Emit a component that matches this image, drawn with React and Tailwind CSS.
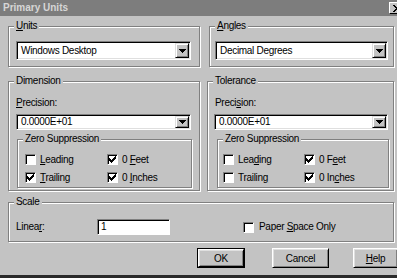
import React from "react";

const BG = "bg-[#c3c3c3]";

function Group({ label, className, children }) {
  return (
    <div
      className={`border border-[#808080] shadow-[inset_1px_1px_0_#fff,1px_1px_0_#fff] ${className}`}
    >
      <div className="-mt-[7px] ml-[5px] w-fit px-[2px] bg-[#c3c3c3] h-[12px] leading-[12px]">
        {label}
      </div>
      {children}
    </div>
  );
}

function Arrow() {
  return (
    <svg width="7" height="4" viewBox="0 0 7 4" shapeRendering="crispEdges">
      <path d="M0 0h7v1H0zM1 1h5v1H1zM2 2h3v1H2zM3 3h1v1H3z" fill="#000" />
    </svg>
  );
}

function Combo({ text, className }) {
  return (
    <div
      className={`flex bg-white border border-t-[#808080] border-l-[#808080] border-b-white border-r-white shadow-[inset_1px_1px_0_#000,inset_-1px_-1px_0_#dfdfdf] p-[1px] ${className}`}
    >
      <div className="flex-1 flex items-center pl-[3px] leading-[12px]">{text}</div>
      <div className="w-[14px] h-full flex items-center justify-center bg-[#c3c3c3] border border-t-[#dfdfdf] border-l-[#dfdfdf] border-r-black border-b-black shadow-[inset_1px_1px_0_#fff,inset_-1px_-1px_0_#808080]">
        <Arrow />
      </div>
    </div>
  );
}

function Box({ checked }) {
  return (
    <div className="w-[11px] h-[11px] bg-white border border-t-[#808080] border-l-[#808080] border-b-white border-r-white shadow-[inset_1px_1px_0_#000] flex items-center justify-center shrink-0">
      {checked && (
        <svg width="7" height="7" viewBox="0 0 7 7" shapeRendering="crispEdges">
          <path
            d="M6 0h1v1H6zM5 1h1v1H5zM0 2h1v3H0zM1 3h1v3H1zM2 4h1v3H2zM3 3h1v3H3zM4 2h1v3H4zM5 1h1v3H5zM6 0h1v3H6z"
            fill="#000"
          />
        </svg>
      )}
    </div>
  );
}

function Check({ checked, children, className }) {
  return (
    <div className={`flex items-center h-[13px] ${className}`}>
      <Box checked={checked} />
      <span className="ml-[4px] leading-[12px]">{children}</span>
    </div>
  );
}

function Btn({ children, className, def }) {
  const inner = (
    <div className="w-full h-full flex items-center justify-center bg-[#c3c3c3] border border-t-white border-l-white border-r-black border-b-black shadow-[inset_1px_1px_0_#dfdfdf,inset_-1px_-1px_0_#808080]">
      {children}
    </div>
  );
  return (
    <div className={`h-[20px] shrink-0 ${def ? "border border-black" : ""} ${className}`}>
      {inner}
    </div>
  );
}

export default function App() {
  return (
    <div
      className={`w-[397px] h-[278px] ${BG} flex flex-col overflow-hidden text-[10px] tracking-[-0.3px] text-black font-['Liberation_Sans',Arial,sans-serif]`}
    >
      <div className="h-[16px] bg-[#7d7d7d] flex items-center pl-[3px] shrink-0">
        <span className="font-bold text-[#d6d6d6] leading-[12px] tracking-normal">Primary Units</span>
        <div className="ml-auto -mr-[8px] w-[16px] h-[12px] bg-[#c3c3c3] border border-t-white border-l-white border-r-black border-b-black flex items-center justify-center">
          <svg width="8" height="7" viewBox="0 0 8 7" shapeRendering="crispEdges">
            <path
              d="M0 0h2v1H0zM6 0h2v1H6zM1 1h2v1H1zM5 1h2v1H5zM2 2h4v1H2zM3 3h2v1H3zM2 4h4v1H2zM1 5h2v1H1zM5 5h2v1H5zM0 6h2v1H0zM6 6h2v1H6z"
              fill="#000"
            />
          </svg>
        </div>
      </div>

      <div className="flex-1 flex flex-col pl-[8px] pt-[10px]">
        <div className="flex">
          <Group
            className="w-[192px] h-[41px]"
            label={
              <>
                <u>U</u>nits
              </>
            }
          >
            <Combo text="Windows Desktop" className="mt-[9px] ml-[7px] w-[175px] h-[19px]" />
          </Group>
          <Group
            className="ml-[9px] w-[185px] h-[41px]"
            label={
              <>
                <u>A</u>ngles
              </>
            }
          >
            <Combo text="Decimal Degrees" className="mt-[9px] ml-[5px] w-[173px] h-[19px]" />
          </Group>
        </div>

        <div className="flex mt-[14px]">
          <Group className="w-[192px] h-[110px]" label="Dimension">
            <div className="mt-[10px] ml-[7px] h-[12px] leading-[12px]">
              <u>P</u>recision:
            </div>
            <Combo text="0.0000E+01" className="mt-[5px] ml-[7px] w-[175px] h-[16px]" />
            <Group className="mt-[9px] ml-[8px] w-[175px] h-[49px]" label="Zero Suppression">
              <div className="flex mt-[8px] ml-[7px]">
                <Check className="w-[82px]">
                  <u>L</u>eading
                </Check>
                <Check checked>
                  0 <u>F</u>eet
                </Check>
              </div>
              <div className="flex mt-[5px] ml-[7px]">
                <Check checked className="w-[82px]">
                  <u>T</u>railing
                </Check>
                <Check checked>
                  0 <u>I</u>nches
                </Check>
              </div>
            </Group>
          </Group>

          <Group className="ml-[7px] w-[187px] h-[110px]" label="Tolerance">
            <div className="mt-[10px] ml-[7px] h-[12px] leading-[12px]">
              Preci<u>s</u>ion:
            </div>
            <Combo text="0.0000E+01" className="mt-[5px] ml-[6px] w-[174px] h-[16px]" />
            <Group className="mt-[9px] ml-[9px] w-[172px] h-[49px]" label="Zero Suppression">
              <div className="flex mt-[8px] ml-[5px]">
                <Check className="w-[81px]">
                  Lea<u>d</u>ing
                </Check>
                <Check checked>
                  0 F<u>e</u>et
                </Check>
              </div>
              <div className="flex mt-[5px] ml-[5px]">
                <Check className="w-[81px]">
                  Trailin<u>g</u>
                </Check>
                <Check checked>
                  0 In<u>c</u>hes
                </Check>
              </div>
            </Group>
          </Group>
        </div>

        <Group className="mt-[11px] w-[386px] h-[40px]" label="Scale">
          <div className="flex items-center mt-[11px] ml-[7px] h-[16px]">
            <div className="w-[81px] leading-[12px]">
              Linea<u>r</u>:
            </div>
            <div className="w-[73px] h-[16px] bg-white border border-t-[#808080] border-l-[#808080] border-b-white border-r-white shadow-[inset_1px_1px_0_#000] flex items-center pl-[3px] leading-[12px]">
              1
            </div>
            <div className="ml-[73px] flex items-center">
              <Box />
              <span className="ml-[5px] leading-[12px]">
                Paper <u>S</u>pace Only
              </span>
            </div>
          </div>
        </Group>

        <div className="flex mt-[6px] ml-[189px]">
          <Btn def className="w-[48px]">OK</Btn>
          <Btn className="ml-[27px] w-[57px]">Cancel</Btn>
          <Btn className="ml-[24px] w-[45px]">
            <span>
              <u>H</u>elp
            </span>
          </Btn>
        </div>
      </div>
      <div className="h-[3px] bg-[#2a2a2a] shrink-0" />
    </div>
  );
}
